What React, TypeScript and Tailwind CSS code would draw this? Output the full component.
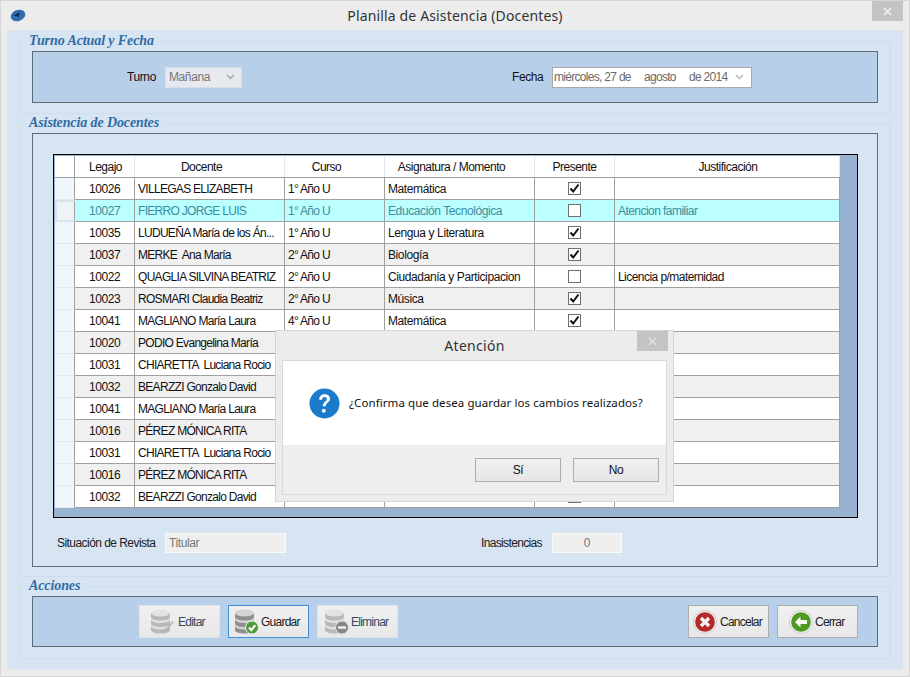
import type { ReactNode } from "react";

const filas = [
  ["10026", "VILLEGAS ELIZABETH", "1° Año U", "Matemática", true, ""],
  ["10027", "FIERRO JORGE LUIS", "1° Año U", "Educación Tecnológica", false, "Atencion familiar"],
  ["10035", "LUDUEÑA María de los Án...", "1° Año U", "Lengua y Literatura", true, ""],
  ["10037", "MERKE  Ana María", "2° Año U", "Biología", true, ""],
  ["10022", "QUAGLIA SILVINA BEATRIZ", "2° Año U", "Ciudadanía y Participacion", false, "Licencia p/maternidad"],
  ["10023", "ROSMARI Claudia Beatriz", "2° Año U", "Música", true, ""],
  ["10041", "MAGLIANO María Laura", "4° Año U", "Matemática", true, ""],
  // de aca en adelante el dialogo tapa curso y asignatura
  ["10020", "PODIO Evangelina María", "", "", true, ""],
  ["10031", "CHIARETTA  Luciana Rocio", "", "", true, ""],
  ["10032", "BEARZZI Gonzalo David", "", "", true, ""],
  ["10041", "MAGLIANO María Laura", "", "", true, ""],
  ["10016", "PÉREZ MÓNICA RITA", "", "", true, ""],
  ["10031", "CHIARETTA  Luciana Rocio", "", "", true, ""],
  ["10016", "PÉREZ MÓNICA RITA", "", "", true, ""],
  ["10032", "BEARZZI Gonzalo David", "", "", true, ""],
] as const;

const legendClass =
  "w-fit -mt-[9px] ml-[4px] px-[4px] h-[18px] leading-[16px] text-[14px] font-bold italic text-[#2f6ca3] bg-[#d7e4f2] [font-family:'Liberation_Serif',serif] tracking-[-0.1px] whitespace-nowrap";

function Discos({ claro }: { claro?: boolean }) {
  const top = claro ? "#e2e2e2" : "#d4d4d4";
  const side = claro ? "#b9b9b9" : "#8f8f8f";
  return (
    <>
      {[17, 10.5, 4].map((y) => (
        <g key={y}>
          <path d={`M1 ${y}v4c0 2 4 3.500 9.500 3.500s9.500-1.500 9.500-3.500v-4z`} fill={side} />
          <ellipse cx="10.500" cy={y} rx="9.500" ry="3.500" fill={top} />
        </g>
      ))}
    </>
  );
}

function IconoDb({ tipo }: { tipo: "editar" | "guardar" | "eliminar" }) {
  return (
    <svg width="26" height="26" viewBox="0 0 26 26" className="shrink-0">
      <Discos claro={tipo !== "guardar"} />
      {tipo === "editar" && <path d="M12 23l11-11 1 1-10 11z" fill="#b5b5b5" />}
      {tipo === "guardar" && (
        <>
          <circle cx="18" cy="18.500" r="6.500" fill="#4c9a3a" stroke="#f2f2f2" />
          <path d="M15 18.500l2.300 2.700 4-5" stroke="#fff" strokeWidth="2" fill="none" />
        </>
      )}
      {tipo === "eliminar" && (
        <>
          <circle cx="18" cy="18.500" r="6.500" fill="#858585" stroke="#e0e0e0" />
          <path d="M14 18.500h8" stroke="#f2f2f2" strokeWidth="2.400" />
        </>
      )}
    </svg>
  );
}

function Boton({
  icono,
  texto,
  variante = "normal",
  clase,
}: {
  icono: ReactNode;
  texto: string;
  variante?: "normal" | "apagado" | "foco";
  clase: string;
}) {
  const borde =
    variante === "foco"
      ? "border-[#3f8fd8] text-[#1c1c1c]"
      : variante === "apagado"
        ? "border-[#dde3ea] text-[#33485e]"
        : "border-[#adadad] text-[#1c1c1c]";
  return (
    <button
      className={`w-[81px] h-[33px] flex items-center justify-start border bg-gradient-to-b from-[#f0f0f0] to-[#e8e8e8] ${borde} ${clase}`}
    >
      {icono}
      <span className="tracking-[-0.75px]">{texto}</span>
    </button>
  );
}

function Check({ marcado }: { marcado: boolean }) {
  return (
    <span className="w-[13px] h-[13px] border border-[#6f6f6f] bg-white flex items-center justify-center">
      {marcado && (
        <svg width="11" height="11" viewBox="0 0 11 11">
          <path d="M1.500 5.500l2.700 3L9.500 1.500" stroke="#111" strokeWidth="2" fill="none" />
        </svg>
      )}
    </span>
  );
}

function Grilla() {
  return (
    <div className="mt-[20px] ml-[20px] w-[805px] h-[364px] border border-black bg-[#98b3d2] overflow-hidden p-[1px]">
      <div className="flex w-fit h-[22px] bg-white border-b border-[#a0a0a0] tracking-[-0.5px]">
        <div className="w-[20px] border-r border-[#a0a0a0]" />
        {[
          ["Legajo", "w-[60px] pl-[2px]"],
          ["Docente", "w-[150px] pr-[16px]"],
          ["Curso", "w-[100px] pr-[16px]"],
          ["Asignatura / Momento", "w-[150px] pr-[16px]"],
          ["Presente", "w-[80px]"],
          ["Justificación", "w-[225px] pl-[2px]"],
        ].map(([titulo, ancho]) => (
          <div key={titulo} className={`${ancho} border-r border-[#e3e8ef] flex items-center justify-center`}>
            {titulo}
          </div>
        ))}
      </div>
      {filas.map((f, i) => {
        const sel = i === 1;
        const fondo = sel ? "bg-[#bbffff] text-[#3a8ea0]" : i % 2 === 1 ? "bg-[#f0f0f0] text-[#111]" : "bg-white text-[#111]";
        const celda = "border-r border-b border-[#a0a0a0] flex items-center h-[22px] overflow-hidden whitespace-pre";
        return (
          <div key={i} className="flex h-[22px]">
            <div
              className={`w-[20px] h-[22px] border-r border-[#a0a0a0] ${
                sel ? "bg-[#eef3f8] border-2 border-[#dbe3ec] border-r-[#a0a0a0]" : "bg-[#f1f6fc] border-b border-b-[#e3e9f1]"
              }`}
            />
            <div className={`flex ${fondo}`}>
              <div className={`w-[60px] pl-[14px] ${celda}`}>{f[0]}</div>
              <div className={`w-[150px] pl-[3px] tracking-[-0.7px] ${celda}`}>{f[1]}</div>
              <div className={`w-[100px] pl-[3px] tracking-[-0.7px] ${celda}`}>{f[2]}</div>
              <div className={`w-[150px] pl-[3px] ${celda}`}>{f[3]}</div>
              <div className={`w-[80px] justify-center ${celda}`}>
                <Check marcado={f[4]} />
              </div>
              <div className={`w-[225px] pl-[3px] tracking-[-0.55px] ${celda}`}>{f[5]}</div>
            </div>
          </div>
        );
      })}
    </div>
  );
}

function Dialogo() {
  return (
    <div className="absolute left-[274px] top-[329px] w-[399px] h-[172px] bg-[#ececec] border border-[#d4d4d4] flex flex-col px-[6px]">
      <div className="relative h-[29px] flex items-center justify-center text-[14px] tracking-[0.3px] text-[#333] [font-family:'Noto_Sans',sans-serif]">
        Atención
        <div className="absolute right-[-1px] top-0 w-[31px] h-[20px] bg-[#c4c4c4] flex items-center justify-center">
          <svg width="9" height="9" viewBox="0 0 9 9">
            <path d="M1 1l7 7M8 1L1 8" stroke="#e4e4e4" strokeWidth="1.400" />
          </svg>
        </div>
      </div>
      <div className="border border-[#d9d9d9] flex flex-col flex-1 mb-[6px]">
        <div className="h-[84px] bg-white flex items-center pl-[26px] gap-[9px]">
          <svg width="31" height="31" viewBox="0 0 32 32" className="shrink-0">
            <circle cx="16" cy="16" r="15.500" fill="#1a7bcb" />
            <path d="M10.500 12c0-3.400 2.500-5.500 5.700-5.500 3.300 0 5.500 2 5.500 4.600 0 4-4.500 4-4.500 7.700h-3c0-4.500 4.200-4.700 4.200-7.500 0-1.200-.9-2.100-2.300-2.100-1.500 0-2.500 1-2.600 2.800z" fill="#fff" />
            <circle cx="15.300" cy="23.500" r="2" fill="#fff" />
          </svg>
          <span className="text-[11.5px] tracking-[0.08px] whitespace-nowrap text-[#111] [font-family:'Noto_Sans',sans-serif]">
            ¿Confirma que desea guardar los cambios realizados?
          </span>
        </div>
        <div className="flex-1 bg-[#eeeeee] flex justify-end items-start pt-[13px] pr-[7px] gap-[12px]">
          <button className="w-[86px] h-[24px] border border-[#adadad] bg-gradient-to-b from-[#f0f0f0] to-[#e6e6e6]">Sí</button>
          <button className="w-[86px] h-[24px] border border-[#adadad] bg-gradient-to-b from-[#f0f0f0] to-[#e6e6e6]">No</button>
        </div>
      </div>
    </div>
  );
}

export default function App() {
  return (
    <div className="relative w-[910px] h-[677px] bg-[#ececec] border border-[#d6d6d6] text-[12px] text-[#111] overflow-hidden [font-family:'Liberation_Sans',sans-serif] tracking-[-0.4px]">
      {/* Barra de título */}
      <div className="relative h-[29px] flex items-center justify-center text-[14px] tracking-[0.15px] text-[#333] [font-family:'Noto_Sans',sans-serif]">
        <svg width="16" height="13" viewBox="0 0 16 13" className="absolute left-[9px] top-[8px]">
          <ellipse cx="8" cy="6.500" rx="7.500" ry="5.500" transform="rotate(-20 8 6.500)" fill="#2f6db0" />
          <path d="M4 7c2-3 5-3 7-4-2 2-3 3-2 6-1-2-3-2-5-2z" fill="#0f2c50" />
        </svg>
        Planilla de Asistencia (Docentes)
        <div className="absolute right-[6px] top-0 w-[31px] h-[20px] bg-[#c4c4c4] flex items-center justify-center">
          <svg width="9" height="9" viewBox="0 0 9 9">
            <path d="M1 1l7 7M8 1L1 8" stroke="#f4f4f4" strokeWidth="1.400" />
          </svg>
        </div>
      </div>

      {/* Panel principal */}
      <div className="mx-[6px] w-[896px] h-[640px] bg-[#d7e4f2] border border-[#dfe4ea] pt-[10px] pl-[12px]">
        {/* Turno y fecha */}
        <div className="w-[871px] h-[73px] border border-[#cfdcea]">
          <div className={legendClass}>Turno Actual y Fecha</div>
          <div className="ml-[11px] w-[846px] h-[52px] bg-[#b8cfe9] border border-[#5f6b78] flex items-center">
            <span className="ml-[94px] w-[38px]">Turno</span>
            <div className="w-[77px] h-[21px] bg-[#e6e9ee] border border-[#d5dde6] text-[#777] flex items-center justify-between pl-[3px] pr-[6px]">
              Mañana
              <svg width="9" height="6" viewBox="0 0 9 6">
                <path d="M1 1l3.500 3.500L8 1" stroke="#a8a8a8" strokeWidth="1.500" fill="none" />
              </svg>
            </div>
            <span className="ml-[270px] w-[40px]">Fecha</span>
            <div className="w-[200px] h-[21px] bg-white border border-[#a9a9a9] text-[#6a6a6a] flex items-center justify-between pl-[1px] pr-[7px] whitespace-pre tracking-[-0.7px]">
              miércoles, 27 de     agosto     de 2014
              <svg width="9" height="6" viewBox="0 0 9 6">
                <path d="M1 1l3.500 3.500L8 1" stroke="#b8b8b8" strokeWidth="1.500" fill="none" />
              </svg>
            </div>
          </div>
        </div>

        {/* Asistencia */}
        <div className="mt-[9px] w-[871px] h-[454px] border border-[#cfdcea]">
          <div className={legendClass}>Asistencia de Docentes</div>
          <div className="ml-[11px] w-[846px] h-[434px] border border-[#5f6b78]">
            <Grilla />
            <div className="flex items-center mt-[15px] ml-[24px] text-[#1c1c1c]">
              <span className="w-[108px] tracking-[-0.55px]">Situación de Revista</span>
              <div className="w-[121px] h-[20px] bg-[#efefef] border border-[#fafafa] text-[#777] flex items-center pl-[3px]">Titular</div>
              <span className="ml-[195px] w-[71px] tracking-[-0.65px]">Inasistencias</span>
              <div className="w-[70px] h-[20px] bg-[#efefef] border border-[#fafafa] text-[#777] flex items-center justify-center">0</div>
            </div>
          </div>
        </div>

        {/* Acciones */}
        <div className="mt-[9px] w-[871px] h-[73px] border border-[#cfdcea]">
          <div className={legendClass}>Acciones</div>
          <div className="ml-[11px] w-[846px] h-[51px] bg-[#b8cfe9] border border-[#5f6b78] flex items-center pl-[106px]">
            <Boton icono={<IconoDb tipo="editar" />} texto="Editar" variante="apagado" clase="pl-[10px] gap-[2px]" />
            <Boton icono={<IconoDb tipo="guardar" />} texto="Guardar" variante="foco" clase="ml-[8px] pl-[5px] gap-[1px]" />
            <Boton icono={<IconoDb tipo="eliminar" />} texto="Eliminar" variante="apagado" clase="ml-[8px] pl-[6px] gap-[1px]" />
            <Boton
              clase="ml-[290px] pl-[4px] gap-[3px]"
              texto="Cancelar"
              icono={
                <svg width="24" height="24" viewBox="0 0 24 24" className="shrink-0">
                  <circle cx="12" cy="12" r="11.500" fill="#f3e6e6" stroke="#cfcfcf" />
                  <circle cx="12" cy="12" r="9.800" fill="#b32a2a" />
                  <path d="M8 8l8 8M16 8l-8 8" stroke="#f4f0f0" strokeWidth="3.400" />
                </svg>
              }
            />
            <Boton
              clase="ml-[8px] pl-[11px] gap-[2px]"
              texto="Cerrar"
              icono={
                <svg width="24" height="24" viewBox="0 0 24 24" className="shrink-0">
                  <circle cx="12" cy="12" r="11.500" fill="#eef3ea" stroke="#cfcfcf" />
                  <circle cx="12" cy="12" r="9.800" fill="#4f9a25" />
                  <path d="M11.500 6.500L6 12l5.500 5.500v-3.500H18v-4h-6.500z" fill="#f4f8ef" />
                </svg>
              }
            />
          </div>
        </div>
      </div>

      <Dialogo />
    </div>
  );
}
